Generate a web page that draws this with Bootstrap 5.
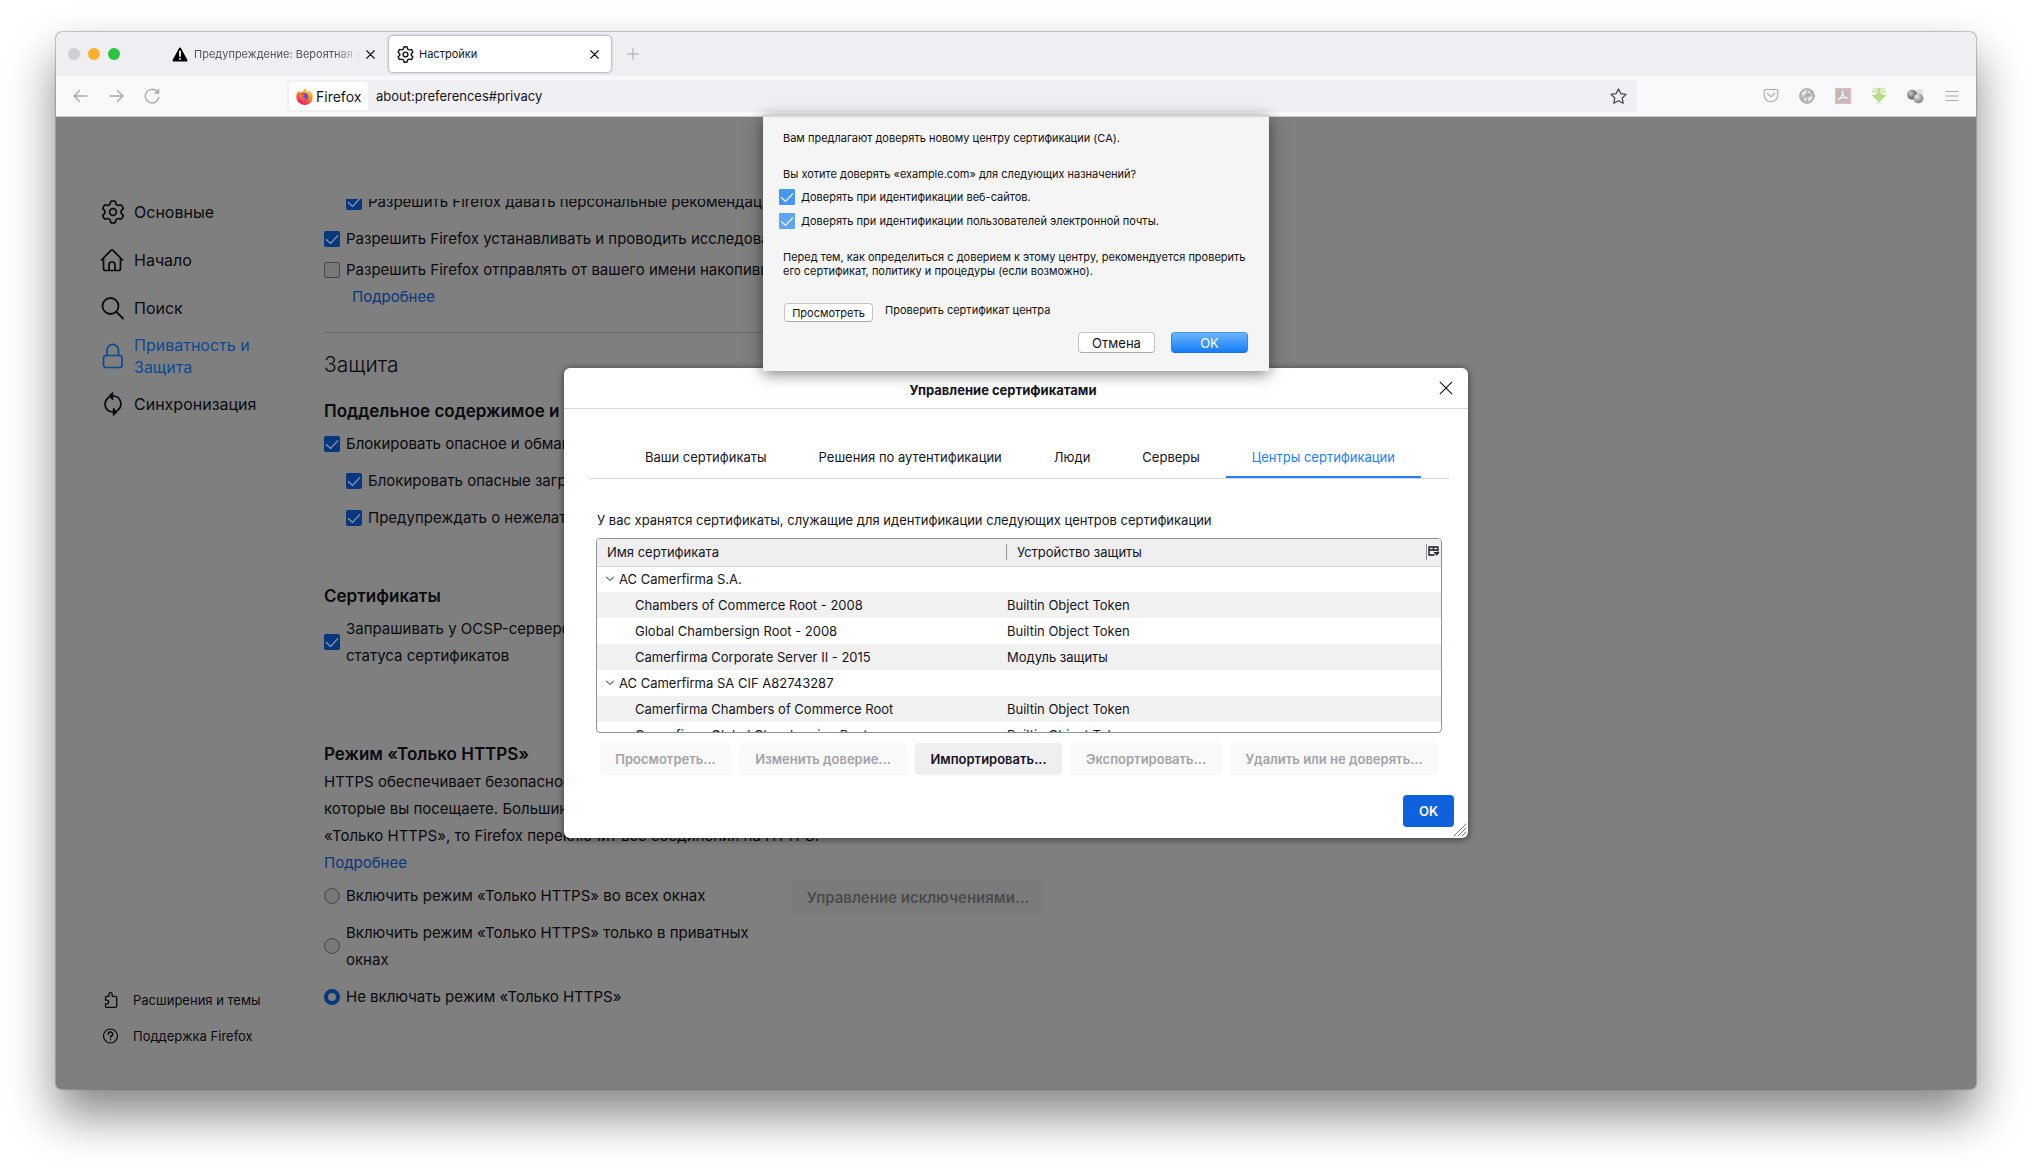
<!DOCTYPE html>
<html lang="ru">
<head>
<meta charset="utf-8">
<meta name="viewport" content="width=device-width, initial-scale=1">
<title>Настройки</title>
<link href="https://cdn.jsdelivr.net/npm/bootstrap@5.3.0/dist/css/bootstrap.min.css" rel="stylesheet">
<style>
:root { --ink: #0a0a0d; --accent: #06387d; --dim: #7f7f7f; }
body { font-family: Inter, "Liberation Sans", sans-serif; font-size: 15px; line-height: 27px; color: var(--ink); background: #fff; padding: 32px 56px 80px; }
svg { display: block; flex: none; stroke-linecap: round; stroke-linejoin: round; }
svg:not([fill]) { fill: none; }
svg:not([stroke]) { stroke: currentColor; }
button { font-family: inherit; }
a { text-decoration: none; }

.win { border-radius: 6px; background: var(--dim); box-shadow: 0 0 1px 1px rgba(0,0,0,.22), 0 26px 48px rgba(0,0,0,.48); }
.tabbar { height: 44px; background: #efeef3; border-radius: 6px 6px 0 0; padding: 0 12px; font-size: 11px; line-height: 16px; }
.dot { width: 12px; height: 12px; border-radius: 50%; }
.tab-item { height: 36px; color: #15141a; }
.tab-idle { width: 221px; margin-left: 43px; padding: 0 9px; gap: 6px; }
.tab-idle .tab-name { color: #55545c; -webkit-mask-image: linear-gradient(90deg, #000 85%, transparent); mask-image: linear-gradient(90deg, #000 85%, transparent); }
.tab-live { width: 222px; margin-left: 5px; padding: 0 12px 0 8px; gap: 5px; background: #fff; border-radius: 4px; box-shadow: 0 0 2px 1px rgba(128,128,152,.55); }
.plain { border: 0; background: none; padding: 0; color: inherit; }

.toolbar { height: 41px; background: #f9f9fb; border-bottom: 1px solid #ccc; padding: 0 16px 0 15px; color: #a9a9ad; }
.urlbar { height: 32px; flex: 0 1 1350px; margin-left: 126px; padding: 2px; background: #f0f0f4; border-radius: 4px; font-size: 13px; color: #15141a; }
.identity { width: 79px; height: 28px; background: #fff; border-radius: 3px; gap: 3px; padding-left: 7px; font-size: 14px; }
.url-input { border: 0; outline: 0; background: none; padding: 0 8px; color: #15141a; min-width: 0; }
.ext { gap: 20px; }

.stage { min-height: 900px; }
.side { width: 268px; padding: 71px 48px 35px 44px; font-size: 16px; line-height: 22px; }
.side .side-link { min-height: 48px; gap: 8px; color: var(--ink); }
.side .side-link.on { color: #0b4a94; }
.side .foot-link { height: 36px; gap: 14px; padding-left: 3px; font-size: 13px; color: var(--ink); }
.pane { width: 732px; margin-top: 82px; padding-bottom: 40px; }
.pane-inner { margin-top: -11px; }
.opt { gap: 6px; margin-bottom: 10px; }
.opt.sub { padding-left: 22px; }
.opt input { appearance: none; flex: none; margin: 0; width: 16px; height: 16px; border: 1px solid #48484e; background: #78787a; }
.opt input[type=checkbox] { border-radius: 2px; }
.opt input[type=radio] { border-radius: 50%; }
.opt input[type=radio]:checked { border: 4px solid var(--accent); background: #7f7f7f; }
input.tick { background: var(--accent) url("data:image/svg+xml,%3Csvg xmlns='http://www.w3.org/2000/svg' viewBox='0 0 16 16'%3E%3Cpath d='M2 8.2l4.6 4.3L14 4.3' fill='none' stroke='%238f9cb0' stroke-width='1.2'/%3E%3C/svg%3E") center/16px 16px !important; border: 0 !important; }
.pane-link { color: var(--accent); }
.rule { height: 1px; background: #666668; margin: 22px 0 16px; }
.pane h1 { font-size: 21px; line-height: 32px; font-weight: 300; margin: 0 0 17px; }
.pane h2 { font-size: 17px; line-height: 27px; font-weight: 600; margin: 0 0 5px; }
.modes { padding-top: 6px; }
.btn-dim { height: 35px; width: 252px; border: 0; border-radius: 4px; background: #7b7b7c; color: #4b4b4d; font-weight: 600; font-size: 15px; padding: 0 8px; margin: -2px 12px 0 0; white-space: nowrap; }

.veil { inset: 0; }
.certs { width: 904px; min-height: 470px; background: #fff; border-radius: 6px; box-shadow: 0 1px 6px 1px rgba(0,0,0,.45); font-size: 13px; line-height: 18px; color: #15141a; }
.certs-head { height: 41px; border-bottom: 1px solid #d5d5da; padding: 0 15px; font-size: 13px; }
.certs-head h3 { font-size: 13px; font-weight: 700; line-height: 18px; margin: 3px 12px 0 0; }
.certs-body { padding: 38px 19px 0 25px; }
.cert-tabs { border-bottom: 1px solid #d5d5da; padding: 0 32px 0 30px; justify-content: space-between; }
.cert-tabs button { height: 20px; box-sizing: content-box; padding: 0 26px 9px; border: 0; border-bottom: 2px solid transparent; background: none; color: inherit; white-space: nowrap; }
.cert-tabs button.on { color: #2180ff; border-color: #2180ff; }
.cert-box { width: 846px; max-width: 100%; height: 195px; overflow: hidden; border: 1px solid #8f8f9d; border-radius: 4px; margin: 9px 0 0 7px; }
.cert-table { width: 100%; table-layout: fixed; border-collapse: collapse; }
.cert-table th { height: 27px; padding: 0; background: #efeff2; border-bottom: 1px solid #d5d5da; font-weight: 400; }
.cert-table td { height: 26px; padding: 0; white-space: nowrap; }
.cert-table tbody tr:nth-child(even) { background: #f1f1f2; }
.th-cell { height: 16px; line-height: 16px; border-right: 1px solid #8f8f9d; padding-left: 10px; }
.c-name { width: 410px; } .c-pick { width: 14px; }
.kid { padding-left: 38px !important; }
.acts { gap: 8px; padding: 10px 0 0 11px; }
.acts button, .ok-main { height: 32px; border: 0; border-radius: 4px; background: #efeff2; color: #15141a; font-weight: 600; font-size: 13px; padding: 0 8px; white-space: nowrap; }
.acts button:disabled { background: #f9f9fa; color: #a3a3a6; }
.acts .w1 { width: 131px; } .acts .w2 { width: 168px; } .acts .w3 { width: 147px; } .acts .w4 { width: 152px; } .acts .w5 { width: 208px; }
.ok-main { width: 51px; background: #0f62dd; color: #fff; }
.certs-foot { padding: 20px 14px 10px; }
.grip { right: 1px; bottom: 1px; color: #777; }

.sheet { top: -2px; width: 506px; height: 256px; background: #f5f5f5; box-shadow: 0 3px 14px rgba(0,0,0,.5), inset 0 3px 3px -2px rgba(0,0,0,.25); color: #111; font-size: 11px; line-height: 14px; padding: 16px 21px 18px 20px; }
.sheet p { margin: 0; }
.sheet .ask { padding: 22px 0 8px; }
.sheet .note { padding-top: 13px; }
.sheet .view { padding: 25px 0 0 1px; }
.sheet .opt { margin: 0 0 8px -4px; height: 16px; }
.sheet input.tick { background-color: #4696f5 !important; background-image: url("data:image/svg+xml,%3Csvg xmlns='http://www.w3.org/2000/svg' viewBox='0 0 16 16'%3E%3Cpath d='M2 8.2l4.6 4.3L14 4.3' fill='none' stroke='%23ffffff' stroke-width='1.2'/%3E%3C/svg%3E") !important; border-radius: 1px; }
.sheet input.tick.soft { background-color: #5fa5f6 !important; }
.mac { border: 1px solid #c4c4c4; border-bottom-color: #a9a9a9; border-radius: 4px; background: #fff; color: #111; padding: 0; }
.mac-s { width: 89px; height: 19px; font-size: 11px; line-height: 14px; }
.mac-m { width: 77px; height: 21px; font-size: 13px; line-height: 16px; }
.mac-blue { border-color: #3f94f8 #2b85f6 #0f6fee; background: linear-gradient(#6db3fa, #147efb); color: #fff; }
</style>
</head>
<body class="d-flex flex-column min-vh-100">
<svg width="0" height="0" class="position-absolute" aria-hidden="true">
  <symbol id="gear" viewBox="0 0 24 24"><path d="M9.8 1.4Q12 .6 14.200 1.400L15 4.200Q16.200 5.300 17.300 5.500L20 4.800Q22 6.400 22.300 8.700L20.300 10.700Q19.900 12 20.300 13.300L22.300 15.300Q22 17.600 20 19.200L17.300 18.500Q16.200 18.700 15 19.800L14.200 22.600Q12 23.400 9.800 22.600L9 19.800Q7.800 18.700 6.700 18.500L4 19.200Q2 17.600 1.700 15.300L3.700 13.300Q4.100 12 3.700 10.700L1.700 8.700Q2 6.400 4 4.800L6.700 5.500Q7.800 5.300 9 4.200Z"/><circle cx="12" cy="12" r="3.400"/></symbol>
  <symbol id="cross" viewBox="0 0 12 12"><path d="M1 1L11 11M11 1L1 11"/></symbol>
  <symbol id="chev" viewBox="0 0 10 10"><path d="M1.500 3L5 6.500 8.500 3"/></symbol>
</svg>

<div class="win d-flex flex-column flex-grow-1">
  <header>
    <div class="tabbar d-flex align-items-center">
      <div class="d-flex gap-2">
        <span class="dot" style="background:#cfced0"></span><span class="dot" style="background:#fdb02f"></span><span class="dot" style="background:#2ac440"></span>
      </div>
      <div class="tab-item tab-idle d-flex align-items-center">
        <svg width="16" height="15" viewBox="0 0 16 15"><path d="M8 1.500L14.500 13.500H1.500Z" fill="#000" stroke="#000" stroke-width="2"/><path d="M8 4.500V9M8 11.800V12" stroke="#fff" stroke-width="1.800"/></svg>
        <span class="tab-name flex-grow-1 text-nowrap overflow-hidden">Предупреждение: Вероятная угроза</span>
        <button class="plain" aria-label="Закрыть вкладку"><svg width="9" height="9"><use href="#cross" stroke-width="1.500"/></svg></button>
      </div>
      <div class="tab-item tab-live d-flex align-items-center">
        <svg width="17" height="17" stroke-width="2"><use href="#gear"/></svg>
        <span class="flex-grow-1">Настройки</span>
        <button class="plain" aria-label="Закрыть вкладку"><svg width="9" height="9"><use href="#cross" stroke-width="1.500"/></svg></button>
      </div>
      <button class="plain ps-3" aria-label="Новая вкладка"><svg width="12" height="12" viewBox="0 0 12 12" stroke="#a5a5aa"><path d="M6 .5V11.500M.5 6H11.500"/></svg></button>
    </div>
    <div class="toolbar d-flex align-items-center">
      <button class="plain" aria-label="Назад"><svg width="18" height="16" viewBox="0 0 18 16" stroke-width="1.300"><path d="M16 8H3M8.500 2.500L3 8 8.500 13.500"/></svg></button>
      <button class="plain ms-3 ps-1" aria-label="Вперёд"><svg width="18" height="16" viewBox="0 0 18 16" stroke-width="1.300"><path d="M1 8H14M8.500 2.500L14 8 8.500 13.500"/></svg></button>
      <button class="plain ms-3" aria-label="Обновить"><svg width="18" height="16" viewBox="0 0 18 16" stroke-width="1.300"><path d="M15.800 9.500A6.800 6.800 0 1 1 14 3.300"/><path d="M16 1V5.500H11.500Z" fill="currentColor" stroke-width=".5"/></svg></button>
      <div class="urlbar d-flex align-items-center">
        <div class="identity d-flex align-items-center">
          <svg width="17" height="17" viewBox="0 0 16 16" stroke="none">
            <defs><linearGradient id="fx" x1=".8" y1="0" x2=".3" y2="1"><stop offset="0" stop-color="#ffe53d"/><stop offset=".45" stop-color="#ff9022"/><stop offset=".8" stop-color="#ff3a4a"/><stop offset="1" stop-color="#f0177a"/></linearGradient></defs>
            <path d="M8.200 0C9.500 1 10 2.300 10.200 3 11.500 3 12 3.500 12.300 4c0-.8-.1-1.300-.4-1.800C14.500 3.500 15.800 6 15.800 8.500A7.700 7.500 0 0 1 .3 8.400C.3 6 1.200 4 2.600 2.600 2.700 3.300 2.800 3.600 3 4 3.700 3.500 4.600 3.400 5.400 3.500 6.500 3.300 7.800 2 8.200 0Z" fill="url(#fx)"/>
            <circle cx="7.900" cy="8.300" r="3.600" fill="#7543e5"/><path d="M3.500 6.500C5.500 5.500 6.500 6.500 8.300 6.800 8 8 6.500 7.800 6.200 8.800 6.500 10 8.500 10 9.800 9.500 9 12.500 4 12 3.500 6.500Z" fill="#ff7b26"/></svg>
          <span>Firefox</span>
        </div>
        <input class="url-input flex-grow-1" type="text" value="about:preferences#privacy" aria-label="Адрес">
        <button class="plain me-2" aria-label="Добавить закладку"><svg width="17" height="17" viewBox="0 0 16 16" stroke="#4a4a52" stroke-width="1.200"><path d="M8 .9L10.200 5.300 15.100 6 11.500 9.400 12.400 14.400 8 12 3.600 14.400 4.500 9.400 .9 6 5.800 5.300Z"/></svg></button>
      </div>
      <div class="ext d-flex align-items-center ms-auto">
        <svg width="16" height="16" viewBox="0 0 16 16" stroke-width="1.100"><path d="M2.500 1.500H13.500Q14.800 1.500 14.800 2.800V7A6.800 6.800 0 0 1 1.200 7V2.800Q1.200 1.500 2.500 1.500ZM4.500 5.500L8 8.800 11.500 5.500"/></svg>
        <svg width="16" height="16" viewBox="0 0 16 16"><circle cx="8" cy="8" r="7.300" fill="#bdbdbe" stroke="#a0a0a2"/><path d="M3 4.500L7.500 2 7 5.500 3 8ZM9 3L13 4.500 10 7ZM3.500 11L7 7.500 8 10 6 13ZM9.500 9.500L13.500 8 12 12 9 13Z" fill="#ececed" stroke="none"/><path d="M2.500 12.500L13.500 3.500" stroke="#8c8c8e"/></svg>
        <svg width="16" height="16" viewBox="0 0 16 16"><rect x=".7" y=".7" width="14.600" height="14.600" fill="#bcbabb" stroke="#f0b5ae" stroke-width="1.400" stroke-linejoin="miter"/><path d="M7.600 2.800C8.800 3 7.700 7.500 3.200 12.200 2.500 11 6 9.200 12.500 9.800 13 11 9.500 9.800 7.800 6.500 7.200 5 7 3.500 7.600 2.800Z" stroke="#f5f5f5" stroke-width="1.100"/></svg>
        <svg width="16" height="16" viewBox="0 0 16 16" stroke="none"><path d="M4.500 0H5.500V6H6.500V0H9.500V6H10.500V0H11.500V7H15.500L8 14.500.5 7H4.500Z" fill="#b7db86"/><path d="M2 0H3.500V5H1ZM12.500 0H14L15 5H12.500Z" fill="#cde8a8"/><ellipse cx="8" cy="15.300" rx="4" ry=".6" fill="#dedfdc"/></svg>
        <svg width="17" height="16" viewBox="0 0 17 16" stroke="none"><defs><radialGradient id="sa" cx=".35" cy=".35"><stop offset="0" stop-color="#d0d0d0"/><stop offset="1" stop-color="#6d6d6d"/></radialGradient><radialGradient id="sb" cx=".35" cy=".3"><stop offset="0" stop-color="#ededed"/><stop offset="1" stop-color="#989898"/></radialGradient></defs><circle cx="12.500" cy="4" r="3.500" fill="#e3e3e3"/><circle cx="5.200" cy="6.800" r="5" fill="url(#sa)"/><circle cx="11.500" cy="10.500" r="5" fill="url(#sb)"/></svg>
        <svg width="16" height="16" viewBox="0 0 16 16" stroke-width="1.200"><path d="M2 3.500H14M2 8H14M2 12.500H14"/></svg>
      </div>
    </div>
  </header>

  <div class="stage d-flex flex-grow-1 position-relative">
    <nav class="side d-flex flex-column flex-shrink-0">
      <a href="#" class="side-link d-flex align-items-center"><svg width="26" height="24" viewBox="0 0 26 24" stroke-width="1.700"><use href="#gear" x="1" width="24" height="24"/></svg>Основные</a>
      <a href="#" class="side-link d-flex align-items-center"><svg width="26" height="24" viewBox="0 0 26 24" stroke-width="1.700"><path d="M1.500 12L11 2.300Q12 1.300 13 2.300L22.500 12M3.500 10.500V20.500Q3.500 22.500 5.500 22.500H18.500Q20.500 22.500 20.500 20.500V10.500M9 22V16.500Q9 14 12 14T15 16.500V22"/></svg>Начало</a>
      <a href="#" class="side-link d-flex align-items-center"><svg width="26" height="24" viewBox="0 0 26 24" stroke-width="1.800"><circle cx="10.500" cy="10" r="8"/><path d="M16.500 16L23 22.500"/></svg>Поиск</a>
      <a href="#" class="side-link on d-flex align-items-center"><svg width="26" height="26" viewBox="0 0 26 26" stroke-width="1.700"><rect x="3.500" y="12.500" width="18.500" height="12" rx="2.500"/><path d="M7 12.500V7.500A5.700 6 0 0 1 18.500 7.500V12.500"/></svg>Приватность и Защита</a>
      <a href="#" class="side-link d-flex align-items-center"><svg width="26" height="24" viewBox="0 0 26 24" stroke-width="1.700"><path d="M13.500 4Q20.500 4.500 21 12 20.800 16 17.500 18.500M12.500 20Q5.500 19.500 5 12 5.200 8 8.500 5.500"/><path d="M12.800 .8V8L9 4.200ZM13.300 23.200V16L17 19.800Z" fill="currentColor" stroke-width="1"/></svg>Синхронизация</a>
      <div class="mt-auto">
        <a href="#" class="foot-link d-flex align-items-center"><svg width="16" height="16" viewBox="0 0 16 16" stroke-width="1.300"><path d="M2.500 5.500Q2.500 4.300 3.700 4.300H5.800V2.500Q6 .7 7.500 .7T9.200 2.500V4.300H12.300Q13.700 4.300 13.700 5.700V14Q13.700 15.300 12.300 15.300H3.700Q2.500 15.300 2.500 14V11.800H4Q5.700 11.500 5.700 10T4 8.200H2.500Z"/></svg>Расширения и темы</a>
        <a href="#" class="foot-link d-flex align-items-center"><svg width="16" height="16" viewBox="0 0 16 16" stroke-width="1.200"><circle cx="7.500" cy="8" r="7"/><path d="M5.300 6.200A2.200 2.100 0 1 1 8.300 8Q7.500 8.400 7.500 9.500M7.500 11.600V11.700" stroke-width="1.500"/></svg>Поддержка Firefox</a>
      </div>
    </nav>

    <main class="pane overflow-hidden">
      <div class="pane-inner">
        <label class="opt sub d-flex align-items-center"><input type="checkbox" class="tick" checked>Разрешить Firefox давать персональные рекомендации расширений</label>
        <label class="opt d-flex align-items-center mb-1"><input type="checkbox" class="tick" checked>Разрешить Firefox устанавливать и проводить исследования</label>
        <label class="opt d-flex align-items-center mb-0"><input type="checkbox">Разрешить Firefox отправлять от вашего имени накопившиеся сообщения</label>
        <a href="#" class="pane-link d-block ps-4 ms-1">Подробнее</a>
        <div class="rule"></div>
        <h1>Защита</h1>
        <h2>Поддельное содержимое и защита от вредоносных программ</h2>
        <label class="opt d-flex align-items-center"><input type="checkbox" class="tick" checked>Блокировать опасное и обманывающее содержимое</label>
        <label class="opt sub d-flex align-items-center"><input type="checkbox" class="tick" checked>Блокировать опасные загрузки</label>
        <label class="opt sub d-flex align-items-center mb-5"><input type="checkbox" class="tick" checked>Предупреждать о нежелательных и редко загружаемых программах</label>
        <h2 class="pt-1">Сертификаты</h2>
        <label class="opt d-flex align-items-center mb-5"><input type="checkbox" class="tick" checked><span>Запрашивать у OCSP-серверов подтверждение текущего<br>статуса сертификатов</span></label>
        <h2 class="pt-4 mb-0">Режим «Только HTTPS»</h2>
        <p class="mb-0 text-nowrap">HTTPS обеспечивает безопасное, зашифрованное соединение между Firefox и веб-сайтами,<br>которые вы посещаете. Большинство веб-сайтов поддерживает HTTPS, и если включён режим<br>«Только HTTPS», то Firefox переключит все соединения на HTTPS.<br><a href="#" class="pane-link">Подробнее</a></p>
        <div class="modes d-flex align-items-start justify-content-between">
          <div class="flex-grow-1">
            <label class="opt d-flex align-items-center"><input type="radio" name="https">Включить режим «Только HTTPS» во всех окнах</label>
            <label class="opt d-flex align-items-center"><input type="radio" name="https"><span>Включить режим «Только HTTPS» только в приватных<br>окнах</span></label>
            <label class="opt d-flex align-items-center"><input type="radio" name="https" checked>Не включать режим «Только HTTPS»</label>
          </div>
          <button class="btn-dim" disabled>Управление исключениями...</button>
        </div>
      </div>
    </main>

    <div class="veil position-absolute d-flex align-items-center justify-content-center">
      <section class="certs position-relative d-flex flex-column" role="dialog" aria-labelledby="ct">
        <div class="certs-head d-flex align-items-center">
          <h3 id="ct" class="flex-grow-1 text-center">Управление сертификатами</h3>
          <button class="plain" aria-label="Закрыть"><svg width="14" height="14"><use href="#cross"/></svg></button>
        </div>
        <div class="certs-body">
          <div class="cert-tabs d-flex" role="tablist">
            <button role="tab">Ваши сертификаты</button><button role="tab">Решения по аутентификации</button><button role="tab">Люди</button><button role="tab">Серверы</button><button role="tab" class="on" aria-selected="true">Центры сертификации</button>
          </div>
          <p class="mb-0 pt-3 mt-3 ps-2">У вас хранятся сертификаты, служащие для идентификации следующих центров сертификации</p>
          <div class="cert-box">
            <table class="cert-table">
              <colgroup><col class="c-name"><col><col class="c-pick"></colgroup>
              <thead><tr><th><div class="th-cell me-0">Имя сертификата</div></th><th><div class="th-cell">Устройство защиты</div></th><th><button class="plain" aria-label="Выбрать столбцы"><svg width="13" height="12" viewBox="0 0 13 12" stroke-width="1.300" stroke-linecap="butt"><path d="M7 10H2V2H11V6M2 5H11M6.500 2V5"/><path d="M7.500 7.500H12L9.800 10Z" fill="currentColor" stroke-width=".8"/></svg></button></th></tr></thead>
              <tbody>
                <tr><td><div class="d-flex align-items-center ps-2"><svg width="10" height="10" class="me-1"><use href="#chev"/></svg>AC Camerfirma S.A.</div></td><td></td><td></td></tr>
                <tr><td class="kid">Chambers of Commerce Root - 2008</td><td>Builtin Object Token</td><td></td></tr>
                <tr><td class="kid">Global Chambersign Root - 2008</td><td>Builtin Object Token</td><td></td></tr>
                <tr><td class="kid">Camerfirma Corporate Server II - 2015</td><td>Модуль защиты</td><td></td></tr>
                <tr><td><div class="d-flex align-items-center ps-2"><svg width="10" height="10" class="me-1"><use href="#chev"/></svg>AC Camerfirma SA CIF A82743287</div></td><td></td><td></td></tr>
                <tr><td class="kid">Camerfirma Chambers of Commerce Root</td><td>Builtin Object Token</td><td></td></tr>
                <tr><td class="kid">Camerfirma Global Chambersign Root</td><td>Builtin Object Token</td><td></td></tr>
              </tbody>
            </table>
          </div>
          <div class="acts d-flex">
            <button class="w1" disabled>Просмотреть...</button><button class="w2" disabled>Изменить доверие...</button><button class="w3">Импортировать...</button><button class="w4" disabled>Экспортировать...</button><button class="w5" disabled>Удалить или не доверять...</button>
          </div>
        </div>
        <div class="certs-foot d-flex justify-content-end"><button class="ok-main">OK</button></div>
        <svg class="grip position-absolute" width="14" height="14" viewBox="0 0 14 14"><path d="M1 13L13 1M5 13L13 5M9 13L13 9"/></svg>
      </section>
    </div>

    <section class="sheet position-absolute start-50 translate-middle-x d-flex flex-column" role="dialog" aria-label="Загрузка сертификата">
      <p>Вам предлагают доверять новому центру сертификации (CA).</p>
      <p class="ask">Вы хотите доверять «example.com» для следующих назначений?</p>
      <label class="opt d-flex align-items-center"><input type="checkbox" class="tick" checked>Доверять при идентификации веб-сайтов.</label>
      <label class="opt d-flex align-items-center"><input type="checkbox" class="tick soft" checked>Доверять при идентификации пользователей электронной почты.</label>
      <p class="note">Перед тем, как определиться с доверием к этому центру, рекомендуется проверить<br>его сертификат, политику и процедуры (если возможно).</p>
      <div class="view d-flex"><button class="mac mac-s me-2">Просмотреть</button><span class="ps-1">Проверить сертификат центра</span></div>
      <div class="d-flex justify-content-end mt-auto gap-3"><button class="mac mac-m">Отмена</button><button class="mac mac-m mac-blue">OK</button></div>
    </section>
  </div>
</div>
<script src="https://cdn.jsdelivr.net/npm/bootstrap@5.3.0/dist/js/bootstrap.bundle.min.js"></script>
</body>
</html>
